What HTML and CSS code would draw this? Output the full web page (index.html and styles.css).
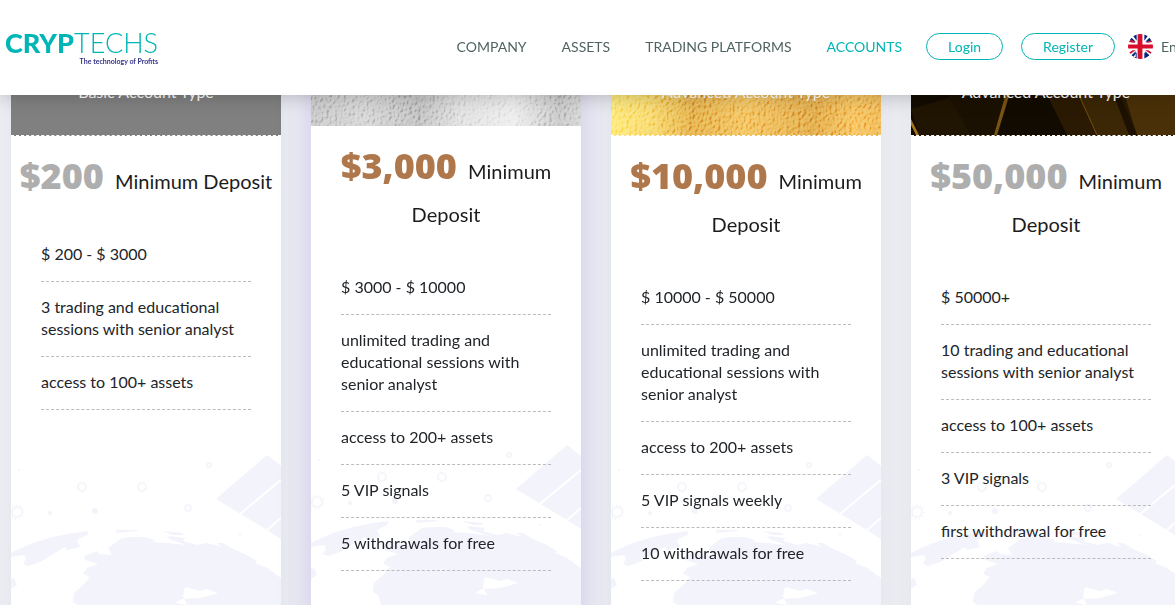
FILE: index.html
```
<!DOCTYPE html>
<html lang="en">
<head>
  <meta charset="UTF-8">
  <meta name="viewport" content="width=device-width, initial-scale=1">
  <title>Cryptechs - Accounts</title>
  <link rel="stylesheet" href="styles.css">
</head>
<body>

  <!-- Shared drawings -->
  <svg class="defs" width="0" height="0" aria-hidden="true">
    <defs>
      <filter id="foil" x="0" y="0" width="100%" height="100%">
        <feTurbulence type="fractalNoise" baseFrequency="0.35 0.28" numOctaves="3" seed="4" result="noise"/>
        <feDiffuseLighting in="noise" surfaceScale="3" lighting-color="#fff">
          <feDistantLight azimuth="35" elevation="34"/>
        </feDiffuseLighting>
      </filter>
      <symbol id="earth" viewBox="0 0 270 215">
        <g fill="#f3f3fc">
          <path d="M0 123 L8 119 L22 113 L42 107 L62 103 L78 101 L76 105 L66 110 L69 117 L56 120 L54 117 L39 126 L29 132 L17 136 L12 134 L15 129 L13 125 L0 127Z"/>
          <path d="M105 100 H126 L127 101 L106 103Z"/>
          <path d="M151 101 L172 103 V105 H162Z"/>
          <path d="M111 108 L122 107 L134 107 L144 110 L142 112 L156 113 L176 115 L166 112 L156 108 L159 106 L174 108 L172 111 L186 115 L196 113 L211 117 L206 113 L212 113 L222 119 L236 125 L246 131 L244 133 L256 138 L270 148 V215 H80 L67 175 L62 172 L63 163 L72 155 L79 147 L72 144 L76 138 L87 134 L81 132 L74 130 L73 126 L86 121 L89 124 L101 125 L97 118 L104 113Z"/>
          <path d="M0 149 L3 148 L6 155 L0 159Z"/>
          <path d="M205 69 L256 25 L270 36 V109 L256 100Z"/>
          <circle cx="8" cy="40" r="1"/>
          <circle cx="84" cy="81" r="3"/>
          <circle cx="229" cy="105" r="1"/>
          <circle cx="39" cy="83" r="2"/>
        </g>
        <path d="M174 157 L189 161 L196 159 L207 163 L189 168 L171 169 L164 173 L176 175 L172 166Z" fill="#fff"/>
        <path d="M229 84 L270 50 M256 100 L270 88" stroke="#fff" stroke-width="2"/>
        <g fill="none" stroke="#f5f5fb" stroke-width="2">
          <circle cx="71" cy="57" r="4"/>
          <circle cx="131" cy="57" r="4"/>
          <circle cx="177" cy="78" r="3"/>
          <circle cx="198" cy="35" r="2"/>
          <circle cx="6" cy="82" r="5"/>
          <circle cx="6" cy="82" r="7" stroke-dasharray="1 3"/>
        </g>
      </symbol>
    </defs>
  </svg>

  <header class="topbar">
    <a class="logo" href="#">
      <span class="logo-name"><b>CRYP</b>TECHS</span>
      <span class="logo-tag">The technology of Profits</span>
    </a>
    <nav class="menu">
      <a href="#">COMPANY</a>
      <a href="#">ASSETS</a>
      <a href="#">TRADING PLATFORMS</a>
      <a class="current" href="#">ACCOUNTS</a>
    </nav>
    <div class="auth">
      <button type="button">Login</button>
      <button type="button">Register</button>
    </div>
    <a class="lang" href="#">
      <svg class="flag" viewBox="0 0 26 26" aria-hidden="true">
        <clipPath id="round"><circle cx="13" cy="13" r="13"/></clipPath>
        <g clip-path="url(#round)">
          <rect width="26" height="26" fill="#fff"/>
          <path d="M4 0 H9 V7Z M17 0 H22 L17 7Z M2 2 L8 8 H4 L1 6Z M24 2 L18 8 H22 L25 6Z M4 26 H9 V19Z M17 26 H22 L17 19Z M2 24 L8 18 L8 24Z M24 24 L18 18 L18 24Z" fill="#00247d"/>
          <path d="M0 8 L4 6 L8 9 H5Z M26 6 L18 9 H21 L26 8Z M0 20 L5 17 H8 L2 21Z M26 20 L21 17 H18 L24 21Z" fill="#cf142b"/>
          <path d="M10 0 H15 V11 H26 V15 H15 V26 H10 V15 H0 V11 H10Z" fill="#d80f2c"/>
        </g>
      </svg>
      <span>English</span>
    </a>
  </header>

  <main class="accounts">
    <section class="card">
      <div class="card-head basic"><p>Basic Account Type</p></div>
      <h3 class="price"><b>$200</b> Minimum Deposit</h3>
      <ul class="perks">
        <li>$ 200 - $ 3000</li>
        <li>3 trading and educational sessions with senior analyst</li>
        <li>access to 100+ assets</li>
      </ul>
      <svg class="art" aria-hidden="true"><use href="#earth"/></svg>
    </section>

    <section class="card featured">
      <div class="card-head silver">
        <svg class="foil" aria-hidden="true"><rect width="100%" height="100%" filter="url(#foil)"/></svg>
      </div>
      <h3 class="price bronze"><b>$3,000</b> Minimum Deposit</h3>
      <ul class="perks">
        <li>$ 3000 - $ 10000</li>
        <li>unlimited trading and educational sessions with senior analyst</li>
        <li>access to 200+ assets</li>
        <li>5 VIP signals</li>
        <li>5 withdrawals for free</li>
      </ul>
      <svg class="art" aria-hidden="true"><use href="#earth"/></svg>
    </section>

    <section class="card">
      <div class="card-head gold">
        <svg class="foil" aria-hidden="true"><rect width="100%" height="100%" filter="url(#foil)"/></svg>
        <p>Advanced Account Type</p>
      </div>
      <h3 class="price bronze"><b>$10,000</b> Minimum Deposit</h3>
      <ul class="perks">
        <li>$ 10000 - $ 50000</li>
        <li>unlimited trading and educational sessions with senior analyst</li>
        <li>access to 200+ assets</li>
        <li>5 VIP signals weekly</li>
        <li>10 withdrawals for free</li>
      </ul>
      <svg class="art" aria-hidden="true"><use href="#earth"/></svg>
    </section>

    <section class="card">
      <div class="card-head black">
        <svg class="shards" viewBox="0 0 270 42" preserveAspectRatio="none" aria-hidden="true">
          <rect width="270" height="42" fill="#120b01"/>
          <path d="M0 16 L40 4 L60 42 H8Z" fill="#201402"/>
          <path d="M36 0 H98 L84 42 H60Z" fill="#1b1102"/>
          <path d="M135 0 H270 V42 H156Z" fill="#2b1a03"/>
          <path d="M167 0 H203 L222 42 H186Z" fill="#3b2605"/>
          <path d="M213 0 H270 V42 H226Z" fill="#493008"/>
          <path d="M202 0 H208 L226 42 H218Z" fill="#1c1102"/>
          <path d="M95 0 H99 L86 42 H83Z" fill="#7a5412"/>
          <path d="M0 26 L8 42 H5 L0 32Z" fill="#a8741d"/>
          <path d="M167 0 L186 42" stroke="#75500f" fill="none"/>
        </svg>
        <p>Advanced Account Type</p>
      </div>
      <h3 class="price"><b>$50,000</b> Minimum Deposit</h3>
      <ul class="perks">
        <li>$ 50000+</li>
        <li>10 trading and educational sessions with senior analyst</li>
        <li>access to 100+ assets</li>
        <li>3 VIP signals</li>
        <li>first withdrawal for free</li>
      </ul>
      <svg class="art" aria-hidden="true"><use href="#earth"/></svg>
    </section>
  </main>

</body>
</html>
```

FILE: styles.css
```
* {
  box-sizing: border-box;
}

html {
  overflow-x: hidden;
}

body {
  margin: 0;
  background-color: #eff1f6;
  color: #212529;
  font-family: Lato, "Open Sans", sans-serif;
  font-size: 16px;
  line-height: 22px;
}

a {
  text-decoration: none;
}

.defs {
  position: absolute;
}

/* Top bar */
.topbar {
  position: fixed;
  top: 0;
  left: 0;
  right: 0;
  z-index: 10;
  display: flex;
  align-items: center;
  height: 95px;
  padding: 0 0 2px 5px;
  background-color: white;
  box-shadow: 0 0 20px rgba(0, 0, 0, 0.25);
}

.logo {
  display: flex;
  flex-direction: column;
  align-items: flex-end;
  color: #00b5b5;
}

.logo-name {
  font-size: 27px;
  font-weight: 300;
  line-height: 28px;
}

.logo-name b {
  font-weight: 900;
}

.logo-tag {
  color: #33338c;
  font-size: 7px;
  font-weight: bold;
  line-height: 8px;
}

.menu {
  display: flex;
  gap: 35px;
  margin-left: auto;
  margin-right: 24px;
}

.menu a {
  color: #4f6462;
  font-size: 14px;
}

.menu a.current {
  color: #00b5b5;
}

.auth {
  display: flex;
  gap: 18px;
  margin-right: 13px;
}

.auth button {
  height: 27px;
  padding: 0 21px;
  border: 1px solid #00b5b5;
  border-radius: 14px;
  background-color: white;
  color: #00b5b5;
  font-family: inherit;
  font-size: 14px;
}

.lang {
  display: flex;
  align-items: center;
  gap: 8px;
  width: 47px;
  overflow: hidden;
  color: #4f6462;
  font-size: 14px;
}

.flag {
  flex: none;
  width: 25px;
  height: 25px;
}

/* Account cards */
.accounts {
  display: grid;
  grid-template-columns: repeat(4, 1fr);
  gap: 30px;
  height: 100vh;
  padding-left: 11px;
  margin-right: -6px;
  overflow: hidden;
}

.card {
  position: relative;
  z-index: 0;
  height: calc(100vh + 40px);
  background-color: white;
  box-shadow: 0 0 30px rgba(40, 40, 80, 0.08);
}

.featured {
  margin-top: -10px;
  box-shadow: 0 0 30px rgba(90, 60, 180, 0.25);
}

.card-head {
  position: relative;
  display: flex;
  align-items: flex-end;
  justify-content: center;
  height: 136px;
  padding-bottom: 32px;
  border-bottom: 1px dashed white;
  color: white;
}

.card-head p {
  position: relative;
  margin: 0;
}

.basic {
  background-color: #808080;
}

.silver {
  border-bottom: none;
  background: linear-gradient(90deg, #c4c4c4, #d2d2d2 20%, #bdbdbd 40%, #dedede 55%, #ececec 75%, #c4c4c4 92%, #d2d2d2);
}

.gold {
  background: linear-gradient(90deg, #ffe873, #f8d766 15%, #e3ac42 30%, #f3c057 50%, #e0a640 75%, #f6bf55 90%, #efb64e);
}

.black {
  background-color: #2b1a03;
}

.foil,
.shards {
  position: absolute;
  left: 0;
  bottom: 0;
  width: 100%;
  height: 100%;
}

.foil {
  opacity: 0.6;
  mix-blend-mode: soft-light;
}

.shards {
  height: 42px;
}

.price {
  margin: 0;
  padding: 22px 0 26px;
  color: #1c1c1c;
  font-size: 20px;
  font-weight: 400;
  line-height: 43px;
  text-align: center;
}

.price b {
  margin-right: 6px;
  color: #aeaeae;
  font-family: "Open Sans", Lato, sans-serif;
  font-size: 36px;
  font-weight: 800;
  line-height: 36px;
}

.bronze b {
  color: #af784c;
}

.perks {
  margin: 0;
  padding: 0 30px;
  list-style: none;
}

.perks li {
  padding: 14px 0 16px;
  border-bottom: 1px dashed #bbb;
}

.art {
  position: absolute;
  z-index: -1;
  left: 0;
  bottom: 0;
  width: 100%;
  height: 215px;
}
```
